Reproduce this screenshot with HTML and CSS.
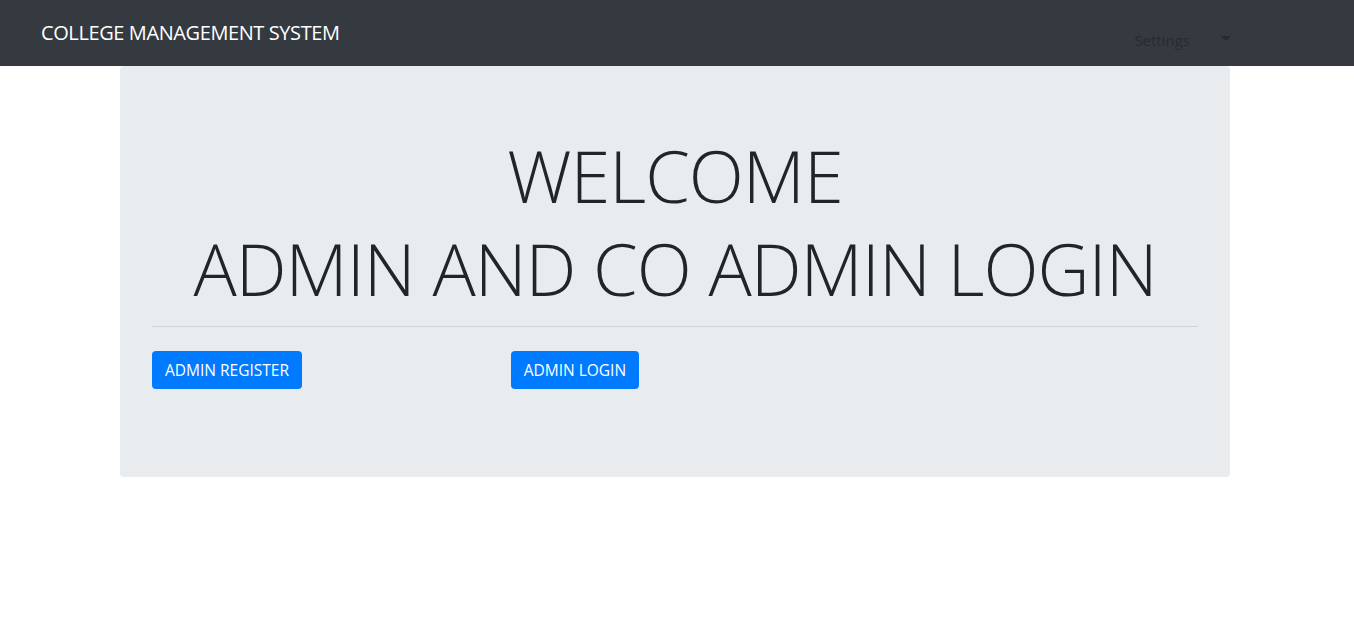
FILE: index.html
```html
<!DOCTYPE html>
<html lang="en">
<head>
<meta charset="utf-8">
<title>College Management System</title>
<link rel="stylesheet" href="styles.css">
</head>
<body>
<nav class="navbar">
  <a class="brand" href="#">COLLEGE MANAGEMENT SYSTEM</a>
  <div class="nav-right">
    <a class="dropdown" href="#">Settings<span class="caret"></span></a>
  </div>
</nav>
<main class="page">
  <div class="container">
    <section class="jumbotron">
      <h1 class="display">WELCOME<br>ADMIN AND CO ADMIN LOGIN</h1>
      <hr class="divider">
      <div class="row">
        <div class="col"><a class="btn" href="#">ADMIN REGISTER</a></div>
        <div class="col"><a class="btn" href="#">ADMIN LOGIN</a></div>
        <div class="col"></div>
      </div>
    </section>
  </div>
</main>
</body>
</html>
```
FILE: styles.css
```css
* { box-sizing: border-box; }
html, body { margin: 0; padding: 0; }
body {
  font-family: "Open Sans", "Noto Sans", sans-serif;
  color: #212529;
  background: #fff;
}
a { text-decoration: none; }

.navbar {
  height: 66px;
  background: #343a40;
  display: flex;
  align-items: flex-start;
  justify-content: space-between;
  padding: 0 41px;
}
.brand {
  color: #fff;
  font-size: 20px;
  line-height: 24px;
  margin-top: 21px;
  letter-spacing: -0.4px;
}
.nav-right {
  margin-top: 29px;
  margin-right: 82px;
}
.dropdown {
  display: flex;
  align-items: center;
  color: #272b30;
  font-size: 15px;
  line-height: 22px;
}
.caret {
  display: inline-block;
  width: 0;
  height: 0;
  margin-left: 31px;
  border-top: 5px solid #272b30;
  border-left: 5px solid transparent;
  border-right: 5px solid transparent;
  margin-top: -4px;
}

.page {
  padding-right: 4px;
}
.container {
  width: 1110px;
  margin: 0 auto;
}
.jumbotron {
  background: #e9ecef;
  border-radius: 4px;
  padding: 64px 32px 88px;
  height: 411px;
}
.display {
  margin: -1px 0 0;
  text-align: center;
  font-weight: 300;
  font-size: 72px;
  line-height: 93px;
  color: #212529;
  letter-spacing: -1px;
}
.divider {
  border: 0;
  border-top: 1px solid rgba(0,0,0,.1);
  margin: 11px 0 24px;
}
.row {
  display: grid;
  grid-template-columns: repeat(3, 1fr);
  column-gap: 30px;
}
.btn {
  display: inline-block;
  background: #007bff;
  color: #fff;
  font-size: 15.5px;
  line-height: 24px;
  padding: 7px 13px;
  border-radius: 4px;
}
```
